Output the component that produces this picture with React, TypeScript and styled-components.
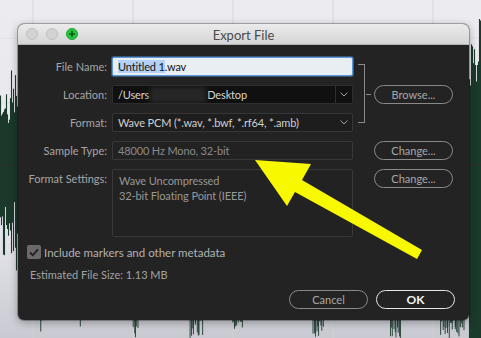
import React from "react";
import styled, { createGlobalStyle } from "styled-components";

const GlobalStyle = createGlobalStyle`
  html, body { margin: 0; padding: 0; }
  body { background: #e6e6ea; font-family: "Lato", "Noto Sans", sans-serif; }
  * { box-sizing: border-box; }
`;

const Stage = styled.div`
  position: relative;
  width: 481px;
  height: 338px;
  overflow: hidden;
  padding: 24px 0 0 18px;
  background: linear-gradient(180deg, #ececf0 0%, #e4e4ea 70%, #c9c9d2 100%);
`;

const Backdrop = styled.svg`
  position: absolute;
  inset: 0;
  z-index: 0;
`;

const Overlay = styled.svg`
  position: absolute;
  inset: 0;
  z-index: 5;
  pointer-events: none;
`;

const Window = styled.div`
  position: relative;
  z-index: 1;
  width: 451px;
  height: 296px;
  border-radius: 6px;
  overflow: hidden;
  background: #232323;
  box-shadow: 0 2px 8px rgba(0, 0, 0, 0.35), 0 0 0 1px rgba(0, 0, 0, 0.25);
  display: flex;
  flex-direction: column;
`;

const TitleBar = styled.div`
  height: 21px;
  flex: none;
  display: grid;
  grid-template-columns: 1fr auto 1fr;
  align-items: center;
  background: linear-gradient(180deg, #ebebeb 0%, #d5d5d5 100%);
  border-bottom: 1px solid #b4b4b4;
`;

const Lights = styled.div`
  display: flex;
  gap: 8px;
  padding-left: 8px;
`;

const Light = styled.span<{ $green?: boolean }>`
  width: 12px;
  height: 12px;
  border-radius: 50%;
  display: flex;
  align-items: center;
  justify-content: center;
  background: ${(p) => (p.$green ? "#2ac33f" : "#d3d3d3")};
  border: 1px solid ${(p) => (p.$green ? "#1ea42f" : "#c0c0c0")};
`;

const Title = styled.div`
  font-family: "Lato", "Noto Sans", sans-serif;
  font-size: 13px;
  color: #4a4a4a;
  padding-top: 1px;
`;

const Body = styled.div`
  flex: 1;
  padding: 12px 16px 0 9px;
  display: flex;
  flex-direction: column;
  font-size: 11px;
`;

const Form = styled.div`
  display: grid;
  grid-template-columns: 85px 241px 21px 79px;
  grid-template-rows: 19px 19px 19px 19px 68px;
  column-gap: 0;
  row-gap: 9px;
`;

const Label = styled.div<{ $top?: boolean }>`
  grid-column: 1;
  text-align: right;
  color: #a6a6a6;
  font-size: 11px;
  line-height: 19px;
  white-space: nowrap;
  padding-right: 5px;
  align-self: ${(p) => (p.$top ? "start" : "center")};
`;

const Field = styled.div<{ $variant: "focus" | "dark" | "select" | "disabled" }>`
  grid-column: 2;
  height: 19px;
  display: flex;
  align-items: center;
  padding-left: 5px;
  font-size: 11px;
  letter-spacing: -0.15px;
  border-radius: 2px;
  white-space: nowrap;
  overflow: hidden;
  position: relative;
  ${(p) =>
    p.$variant === "focus"
      ? `background:#e9eef3;border:1px solid #5a97dc;box-shadow:0 0 0 1px rgba(90,151,220,0.45);color:#111;`
      : p.$variant === "dark"
      ? `background:#101010;border:1px solid #2e2e2e;color:#d6d6d6;`
      : p.$variant === "select"
      ? `background:#1d1d1d;border:1px solid #363636;color:#d0d0d0;`
      : `background:#222222;border:1px solid #383838;color:#8a8a8a;`}
`;

const Selected = styled.span`
  background: #b3d1f6;
`;

const Redacted = styled.span`
  display: inline-block;
  width: 56px;
  height: 16px;
  margin: 0 1px;
  background: #262626;
  filter: blur(2px);
`;

const DropButton = styled.div<{ $sep?: boolean }>`
  margin-left: auto;
  width: 17px;
  height: 100%;
  display: flex;
  align-items: center;
  justify-content: center;
  border-left: ${(p) => (p.$sep ? "1px solid #2f2f2f" : "none")};
`;

const SettingsBox = styled.div`
  grid-column: 2;
  background: #222222;
  border: 1px solid #383838;
  border-radius: 2px;
  padding: 3px 6px;
  color: #979797;
  font-size: 11px;
  letter-spacing: -0.1px;
  line-height: 15px;
`;

const Bracket = styled.div`
  grid-column: 3;
  grid-row: 1 / 4;
  margin: 7px 9px 9px 5px;
  border: 1.5px solid #8a8a8a;
  border-left: none;
  position: relative;
  &::after {
    content: "";
    position: absolute;
    right: -6.5px;
    top: 50%;
    width: 5px;
    border-top: 1.5px solid #8a8a8a;
  }
`;

const Pill = styled.button<{ $primary?: boolean; $row?: number }>`
  grid-column: 4;
  grid-row: ${(p) => p.$row ?? "auto"};
  align-self: start;
  height: 19px;
  width: 79px;
  border-radius: 10px;
  background: transparent;
  font-family: "Lato", "Noto Sans", sans-serif;
  font-size: ${(p) => (p.$primary ? "12px" : "11px")};
  font-weight: ${(p) => (p.$primary ? 700 : 400)};
  color: ${(p) => (p.$primary ? "#f2f2f2" : "#a8a8a8")};
  border: ${(p) => (p.$primary ? "1.5px solid #e6e6e6" : "1.5px solid #8a8a8a")};
  padding: 0;
  display: flex;
  align-items: center;
  justify-content: center;
`;

const CheckRow = styled.label`
  margin-top: 8px;
  display: flex;
  align-items: center;
  gap: 3px;
  color: #b2b2b2;
  font-size: 11.5px;
  height: 14px;
`;

const CheckBox = styled.span`
  width: 14px;
  height: 14px;
  border-radius: 2px;
  background: #6a6a6a;
  display: flex;
  align-items: center;
  justify-content: center;
`;

const SizeLine = styled.div`
  margin-top: 9px;
  padding-left: 3px;
  color: #a2a2a2;
  font-size: 11px;
  line-height: 14px;
`;

const Actions = styled.div`
  margin-top: 8px;
  margin-right: -2px;
  display: flex;
  justify-content: flex-end;
  gap: 8px;
`;

const Chevron = () => (
  <svg width="8" height="5" viewBox="0 0 8 5">
    <path d="M0.5 0.5 L4 4 L7.5 0.5" fill="none" stroke="#a0a0a0" strokeWidth="1" />
  </svg>
);

function rand(seed: number) {
  let s = seed;
  return () => {
    s = (s * 9301 + 49297) % 233280;
    return s / 233280;
  };
}

const Waves = () => {
  const r = rand(7);
  const lines: React.ReactElement[] = [];
  for (let x = 0; x < 18; x += 1) {
    const amp = 40 + r() * 70;
    lines.push(
      <line key={`l${x}`} x1={x + 0.5} x2={x + 0.5} y1={165 - amp * (0.6 + r() * 0.6)} y2={165 + amp * (0.6 + r() * 0.9)} stroke="#1b3a2c" strokeWidth="1.1" />
    );
  }
  for (let x = 469; x < 481; x += 1) {
    const amp = 80 + r() * 50;
    lines.push(
      <line key={`r${x}`} x1={x + 0.5} x2={x + 0.5} y1={165 - amp * (0.8 + r() * 0.4)} y2={338} stroke="#1b3a2c" strokeWidth="1.1" />
    );
  }
  const clusters: [number, number][] = [
    [40, 2], [80, 1], [133, 5], [190, 12], [232, 10], [313, 10], [390, 10], [440, 22],
  ];
  clusters.forEach(([cx, n], ci) => {
    for (let i = 0; i < n; i++) {
      const x = cx + i * 1.1 + r();
      lines.push(
        <line key={`b${ci}-${i}`} x1={x} x2={x} y1={318} y2={320 + r() * 18} stroke="#1b3a2c" strokeWidth="0.9" />
      );
    }
  });
  return <>{lines}</>;
};

export default function App() {
  return (
    <>
      <GlobalStyle />
      <Stage>
        <Backdrop width="481" height="338" viewBox="0 0 481 338">
          {[33, 133, 233, 333, 433].map((x) => (
            <line key={x} x1={x} x2={x} y1={0} y2={338} stroke="#cfd6cf" strokeWidth="0.8" />
          ))}
          {[38, 103, 143, 228, 254, 293].map((y) => (
            <line key={y} x1={0} x2={481} y1={y} y2={y} stroke="#d4dad4" strokeWidth="0.6" />
          ))}
          <Waves />
          <line x1={0} x2={481} y1={165} y2={165} stroke="#3a2a20" strokeWidth="0.8" />
        </Backdrop>

        <Window>
          <TitleBar>
            <Lights>
              <Light />
              <Light />
              <Light $green>
                <svg width="8" height="8" viewBox="0 0 8 8">
                  <path d="M4 1 V7 M1 4 H7" stroke="#0b5e16" strokeWidth="1.6" />
                </svg>
              </Light>
            </Lights>
            <Title>Export File</Title>
            <div />
          </TitleBar>

          <Body>
            <Form>
              <Label style={{ gridRow: 1 }}>File Name:</Label>
              <Field $variant="focus" style={{ gridRow: 1 }}>
                <Selected>Untitled 1</Selected>.wav
              </Field>
              <Bracket />

              <Label style={{ gridRow: 2 }}>Location:</Label>
              <Field $variant="dark" style={{ gridRow: 2 }}>
                /Users<Redacted />Desktop
                <DropButton $sep>
                  <Chevron />
                </DropButton>
              </Field>
              <Pill $row={2}>Browse...</Pill>

              <Label style={{ gridRow: 3 }}>Format:</Label>
              <Field $variant="select" style={{ gridRow: 3 }}>
                Wave PCM (*.wav, *.bwf, *.rf64, *.amb)
                <DropButton>
                  <Chevron />
                </DropButton>
              </Field>

              <Label style={{ gridRow: 4 }}>Sample Type:</Label>
              <Field $variant="disabled" style={{ gridRow: 4 }}>
                48000 Hz Mono, 32-bit
              </Field>
              <Pill $row={4}>Change...</Pill>

              <Label $top style={{ gridRow: 5 }}>Format Settings:</Label>
              <SettingsBox style={{ gridRow: 5 }}>
                Wave Uncompressed
                <br />
                32-bit Floating Point (IEEE)
              </SettingsBox>
              <Pill $row={5}>Change...</Pill>
            </Form>

            <CheckRow>
              <CheckBox>
                <svg width="10" height="9" viewBox="0 0 10 9">
                  <path d="M1 4.5 L3.8 7.3 L9 1.3" fill="none" stroke="#1f1f1f" strokeWidth="1.8" />
                </svg>
              </CheckBox>
              Include markers and other metadata
            </CheckRow>

            <SizeLine>Estimated File Size: 1.13 MB</SizeLine>

            <Actions>
              <Pill as="button">Cancel</Pill>
              <Pill as="button" $primary>
                OK
              </Pill>
            </Actions>
          </Body>
        </Window>

        <Overlay width="481" height="338" viewBox="0 0 481 338">
          <polygon
            points="255,160 311,164 302,180 422,250 417,259 295,192 287,206"
            fill="#f8f800"
          />
        </Overlay>
      </Stage>
    </>
  );
}
